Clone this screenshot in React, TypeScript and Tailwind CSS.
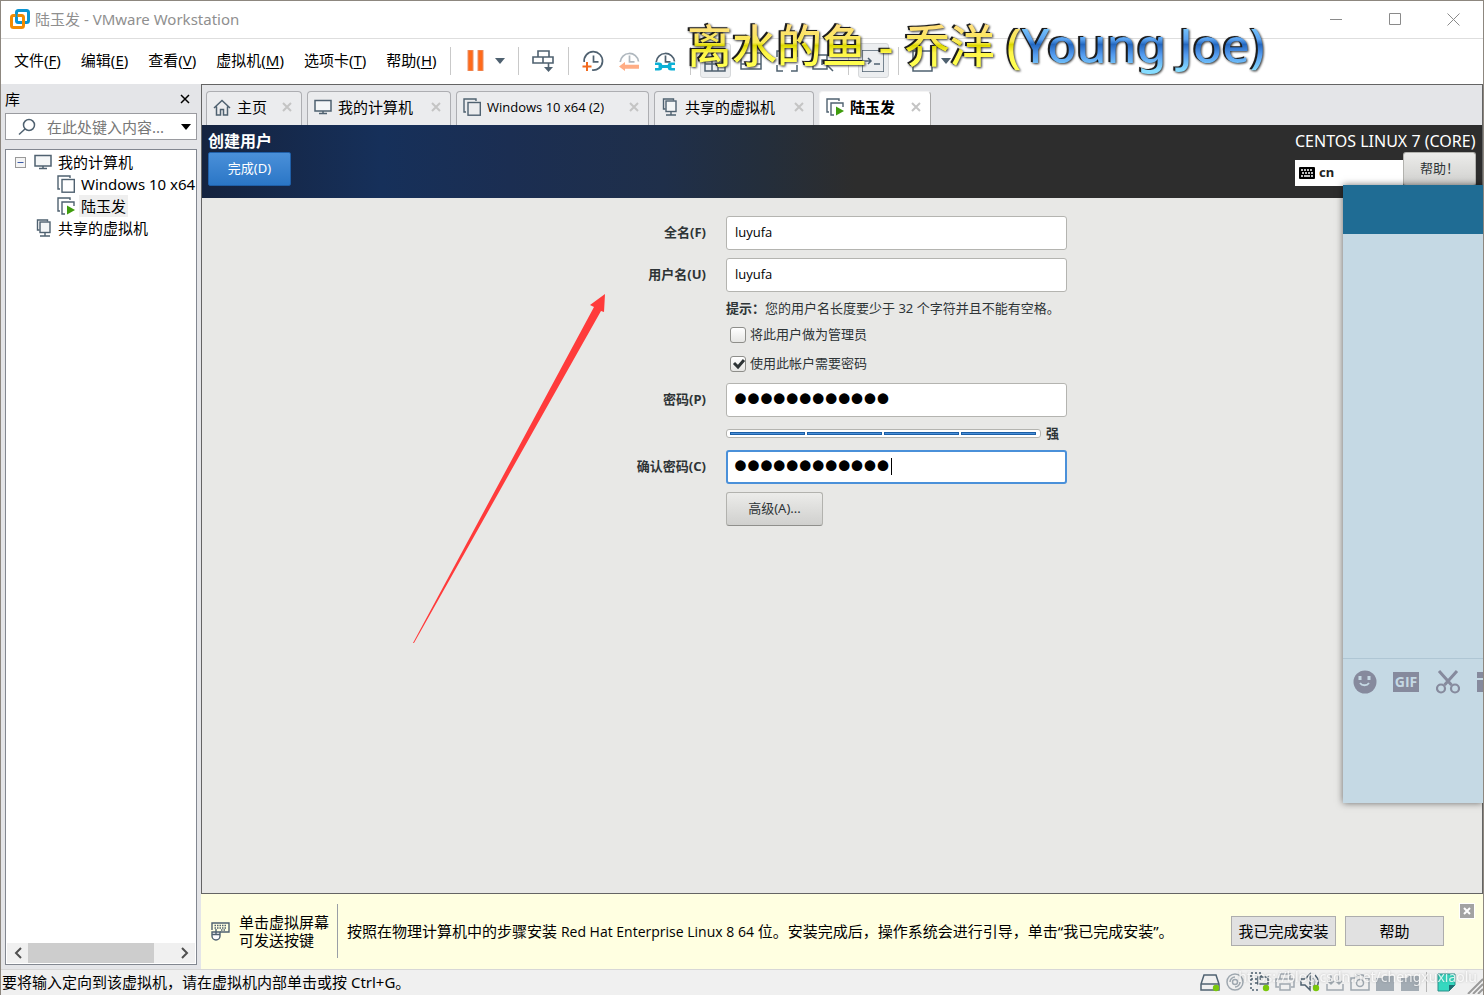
import type { ReactNode } from "react";

const slate = "#4f6170";

const menus = [
  { label: "文件", key: "F" },
  { label: "编辑", key: "E" },
  { label: "查看", key: "V" },
  { label: "虚拟机", key: "M" },
  { label: "选项卡", key: "T" },
  { label: "帮助", key: "H" },
];

/* ---------- icons ---------- */

function VmwareLogo() {
  return (
    <svg width="20" height="20" viewBox="0 0 20 20" fill="none" strokeWidth="3">
      <rect x="6.5" y="1.5" width="12" height="12" rx="2" stroke="#0b95d3" />
      <rect x="1.5" y="6.5" width="12" height="12" rx="2" stroke="#f38b00" />
      <path d="M6.5 5v7a1.5 1.5 0 0 0 1.500 1.500h3" stroke="#0b95d3" strokeWidth="2" />
    </svg>
  );
}

function MonitorIcon() {
  return (
    <svg width="18" height="16" viewBox="0 0 18 16" fill="none" stroke={slate} strokeWidth="1.500" className="shrink-0">
      <rect x="1" y="1.500" width="16" height="10.500" fill="#f4f6f7" />
      <path d="M9 12v2M5 14.500h8" />
    </svg>
  );
}

function PagesIcon({ running = false }: { running?: boolean }) {
  return (
    <svg width="18" height="18" viewBox="0 0 18 18" fill="none" stroke={slate} strokeWidth="1.400" className="shrink-0">
      <path d="M3 14H1V1h12v2" />
      {running ? <path d="M8 17H5V5h12v4" /> : <rect x="5" y="4.500" width="12.300" height="12.700" />}
      {running && <path d="M10 8.500v9l8-4.500z" fill="#3f9c0d" stroke="none" />}
    </svg>
  );
}

function SharedIcon() {
  return (
    <svg width="16" height="18" viewBox="0 0 16 18" fill="none" stroke={slate} strokeWidth="1.400" className="shrink-0">
      <path d="M3.500 11H1.500V1h10v1.500" />
      <rect x="4" y="3" width="10" height="10.500" fill="#f4f6f7" />
      <path d="M9 13.500v3M4 17h10" />
    </svg>
  );
}

function HomeIcon() {
  return (
    <svg width="18" height="17" viewBox="0 0 18 17" fill="none" stroke={slate} strokeWidth="1.500" className="shrink-0">
      <path d="M1 9l8-7.500L17 9M3.500 7.500V16h4v-5.500h3V16h4V7.500" />
    </svg>
  );
}

function CloseIcon() {
  return (
    <svg width="10" height="10" viewBox="0 0 10 10" stroke="#c4c4c4" strokeWidth="2">
      <path d="M1 1l8 8M9 1L1 9" />
    </svg>
  );
}

function Caret({ color = slate }: { color?: string }) {
  return (
    <svg width="10" height="6" viewBox="0 0 10 6">
      <path d="M0 0h10L5 6z" fill={color} />
    </svg>
  );
}

function ClockIcon({ kind }: { kind: "add" | "revert" | "manage" }) {
  return (
    <svg width="22" height="22" viewBox="0 0 22 22" fill="none" stroke={slate} strokeWidth="1.700">
      <g opacity={kind === "revert" ? 0.45 : 1}>
        <path d={kind === "add" ? "M2.200 12A9.200 9.200 0 1 1 10 20" : "M2.200 12A9.200 9.200 0 0 1 20.500 11.500"} />
        <path d="M11.500 5.500v6.300h5" />
      </g>
      {kind === "add" && <path d="M5 12v9M.5 16.500h9" stroke="#f26a1e" strokeWidth="2" />}
      {kind === "revert" && <path d="M1 16.500l6-4.500v2.700h14v4H7V21z" fill="#ffad85" stroke="none" />}
      {kind === "manage" && (
        <path
          d="M1 12.500h4c2 0 3 .800 3.300 2.500h5.400c.300-1.700 1.300-2.500 3.300-2.500h4V15h-3.500v3H21v2.500h-4c-2 0-3-.800-3.300-2.500H8.300c-.300 1.700-1.300 2.500-3.300 2.500H1V18h3.500v-3H1z"
          fill="#0bb0d6"
          stroke="none"
        />
      )}
    </svg>
  );
}

function SendKeysIcon() {
  return (
    <svg width="22" height="22" viewBox="0 0 22 22" fill="none" stroke={slate} strokeWidth="1.600">
      <path d="M6 1h11v6H6zM1 7h20v6H1zM11 7v6M16.500 13v7" />
      <path d="M12 17h9l-4.500 5z" fill={slate} stroke="none" />
    </svg>
  );
}

function ViewIcon({ d }: { d: string }) {
  return (
    <svg width="22" height="22" viewBox="0 0 22 22" fill="none" stroke={slate} strokeWidth="1.500">
      <path d={d} />
    </svg>
  );
}

/* ---------- window chrome ---------- */

function TitleBar() {
  return (
    <header className="flex h-[38px] shrink-0 items-center border-b border-[#dedede] bg-white pb-px pl-[9px]">
      <VmwareLogo />
      <h1 className="ml-[5px] flex-1 text-[15px] leading-5 text-[#8f8f8f]">陆玉发 - VMware Workstation</h1>
      <button aria-label="最小化" className="flex h-full w-[59px] items-center justify-center">
        <svg width="12" height="12" stroke="#8a8a8a"><path d="M0 6.500h12" /></svg>
      </button>
      <button aria-label="最大化" className="flex h-full w-[59px] items-center justify-center">
        <svg width="12" height="12" fill="none" stroke="#8a8a8a"><path d="M.5.500h11v11H.500z" /></svg>
      </button>
      <button aria-label="关闭" className="flex h-full w-[59px] items-center justify-center">
        <svg width="13" height="13" stroke="#8a8a8a"><path d="M.5.500l12 12M12.500.500l-12 12" /></svg>
      </button>
    </header>
  );
}

function Separator() {
  return <span className="mr-[6px] ml-[7px] h-7 w-px shrink-0 bg-[#c9c9c9]" />;
}

function ToolButton({ label, active = false, children }: { label: string; active?: boolean; children: ReactNode }) {
  return (
    <button aria-label={label} className="flex h-10 w-9 shrink-0 items-center justify-center">
      {active ? (
        <span className="flex h-[35px] w-[31px] items-center justify-center rounded-[3px] border border-[#d6d8da] bg-[#eceef0]">
          {children}
        </span>
      ) : (
        children
      )}
    </button>
  );
}

function MenuBar() {
  return (
    <div className="flex h-[45px] shrink-0 items-center bg-white pb-[2px]">
      <nav className="flex w-[442px] shrink-0 gap-5 pb-[2px] pl-[13px] text-[15px] leading-5 whitespace-nowrap">
        {menus.map((m) => (
          <button key={m.key}>
            {m.label}(<u className="underline-offset-2">{m.key}</u>)
          </button>
        ))}
      </nav>
      <Separator />
      <ToolButton label="挂起">
        <svg width="17" height="21"><path d="M1 0h5v21H1zM11 0h5v21h-5z" fill="#ff6a1a" stroke="#e8926a" /></svg>
      </ToolButton>
      <button aria-label="电源选项" className="w-[18px] pl-[2px]"><Caret /></button>
      <Separator />
      <ToolButton label="发送 Ctrl+Alt+Del"><SendKeysIcon /></ToolButton>
      <Separator />
      <ToolButton label="拍摄快照"><ClockIcon kind="add" /></ToolButton>
      <ToolButton label="恢复快照"><ClockIcon kind="revert" /></ToolButton>
      <ToolButton label="管理快照"><ClockIcon kind="manage" /></ToolButton>
      <Separator />
      <ToolButton label="显示库" active><ViewIcon d="M1 1h20v20H1zM1 14h20M8 1v20M14 14v7" /></ToolButton>
      <ToolButton label="显示缩略图"><ViewIcon d="M1 3h20v16H1zM1 14h20" /></ToolButton>
      <ToolButton label="全屏"><ViewIcon d="M1 7V1h6M15 1h6v6M21 15v6h-6M7 21H1v-6" /></ToolButton>
      <ToolButton label="Unity"><ViewIcon d="M1 5h14v14H1zM10 10l11 11M10 15v-5h5" /></ToolButton>
      <Separator />
      <ToolButton label="控制台" active><ViewIcon d="M0 0h22v22H0zM1 11h8M6 8l3 3-3 3M12 14h6" /></ToolButton>
      <Separator />
      <ToolButton label="自由拉伸"><ViewIcon d="M1 1h19v20H1z" /></ToolButton>
      <Caret />
    </div>
  );
}

/* ---------- library ---------- */

function Library() {
  return (
    <aside className="flex w-[200px] shrink-0 flex-col bg-[#e4e5e8] px-1 pb-1 text-[15px]">
      <div className="flex h-[29px] items-center justify-between pr-[7px] leading-5">
        <h2>库</h2>
        <button aria-label="关闭库">
          <svg width="10" height="10" stroke="#000" strokeWidth="1.500"><path d="M1 1l8 8M9 1L1 9" /></svg>
        </button>
      </div>
      <div className="flex h-[27px] items-center border border-[#9a9ba0] bg-white pr-[5px] pl-3">
        <svg width="18" height="18" viewBox="0 0 18 18" fill="none" stroke={slate} strokeWidth="1.500">
          <circle cx="11" cy="7" r="5.500" />
          <path d="M7 11l-6 5.500" />
        </svg>
        <input
          aria-label="搜索库"
          placeholder="在此处键入内容..."
          className="ml-[11px] w-0 flex-1 leading-5 outline-none placeholder:text-[#777]"
        />
        <Caret color="#000" />
      </div>
      <div className="mt-[9px] flex min-h-0 flex-1 flex-col border border-[#828790] bg-white">
        <ul className="flex-1 overflow-hidden pt-px leading-[22px] whitespace-nowrap">
          <li className="flex h-[22px] items-center pl-[9px]">
            <svg width="11" height="11" fill="#f4f4f4" stroke="#999">
              <rect x=".5" y=".5" width="10" height="10" />
              <path d="M2.500 5.500h6" stroke="#3a5aa8" />
            </svg>
            <span className="mr-[6px] ml-2"><MonitorIcon /></span>
            我的计算机
          </li>
          <li className="flex h-[22px] items-center pl-[51px]">
            <PagesIcon />
            <span className="pl-[6px]">Windows 10 x64</span>
          </li>
          <li className="flex h-[22px] items-center pl-[51px]">
            <PagesIcon running />
            <span className="ml-1 bg-[#efefef] px-[2px]">陆玉发</span>
          </li>
          <li className="flex h-[22px] items-center pl-[30px]">
            <SharedIcon />
            <span className="pl-[6px]">共享的虚拟机</span>
          </li>
        </ul>
        <div className="m-px flex h-5 items-center bg-[#f0f0f0]">
          <button aria-label="向左滚动" className="flex w-[21px] justify-center">
            <svg width="8" height="12" fill="none" stroke="#505050" strokeWidth="2"><path d="M7 1L2 6l5 5" /></svg>
          </button>
          <span className="h-full w-[126px] bg-[#cdcdcd]" />
          <button aria-label="向右滚动" className="mr-[6px] ml-auto">
            <svg width="8" height="12" fill="none" stroke="#505050" strokeWidth="2"><path d="M1 1l5 5-5 5" /></svg>
          </button>
        </div>
      </div>
    </aside>
  );
}

/* ---------- tabs ---------- */

const tabs = [
  { label: "主页", icon: <HomeIcon />, width: "w-24", text: "text-[15px]" },
  { label: "我的计算机", icon: <MonitorIcon />, width: "w-36", text: "text-[15px]" },
  { label: "Windows 10 x64 (2)", icon: <PagesIcon />, width: "w-[193px]", text: "font-['Open_Sans'] text-[13px]" },
  { label: "共享的虚拟机", icon: <SharedIcon />, width: "w-40", text: "text-[15px]" },
  { label: "陆玉发", icon: <PagesIcon running />, width: "w-28", text: "text-[15px] font-bold", active: true },
];

function Tabs() {
  return (
    <div role="tablist" className="flex h-10 shrink-0 items-end gap-[5px] bg-[#e4e5e8] pl-1">
      {tabs.map((t) => (
        <div
          key={t.label}
          className={`flex h-[34px] items-center rounded-t-[4px] border border-b-0 pr-[9px] pb-[3px] pl-[6px] ${t.width} ${
            t.active ? "border-[#f4f4f4] border-r-[#aaa] bg-white" : "border-[#adaeb2] bg-[#ebecee]"
          }`}
        >
          <button role="tab" aria-selected={!!t.active} className={`flex flex-1 items-center gap-[6px] leading-5 whitespace-nowrap ${t.text}`}>
            <span className="flex w-[18px] shrink-0 justify-center">{t.icon}</span>
            {t.label}
          </button>
          <button aria-label="关闭选项卡"><CloseIcon /></button>
        </div>
      ))}
    </div>
  );
}

/* ---------- installer running inside the VM ---------- */

const greyButton =
  "rounded-[3px] border border-[#b2b2ae] border-b-[#8f8f8c] bg-linear-to-b from-[#ececea] to-[#d0d0ce] pb-px text-[13px] text-[#2e3436]";
const field =
  "h-[34px] w-full rounded-[3px] border border-[#b4b4b0] bg-white px-2 pb-[2px] font-['Open_Sans'] text-[13px] text-black outline-none";
const dots = "font-['Liberation_Sans'] text-[37px] font-bold text-black outline-none";

function GuestHeader() {
  return (
    <div className="flex h-[73px] shrink-0 justify-between bg-[linear-gradient(to_right,#15233f_0%,#16305a_14%,#1b2e52_24%,#1f2f4a_36%,#242e3b_44%,#2d2d2d_51%)] px-[6px] text-white">
      <div className="flex flex-col items-start pt-[6px]">
        <h2 className="text-[16px] leading-[21px] font-bold">创建用户</h2>
        <button className="h-[34px] w-[83px] rounded-[2px] border border-[#1f5fa8] bg-linear-to-b from-[#4a90d9] to-[#2a76c6] pb-px text-[13px]">
          完成(D)
        </button>
      </div>
      <div className="w-[181px] pt-[6px]">
        <p className="text-[16px] leading-[21px] whitespace-nowrap">CENTOS LINUX 7 (CORE)</p>
        <div className="flex items-end">
          <div className="flex h-[26px] flex-1 items-center gap-1 bg-white pl-1 text-[13px] font-bold text-[#222]">
            <svg width="16" height="12" viewBox="0 0 16 12">
              <rect width="16" height="12" rx="1" fill="#000" />
              <path d="M2 3h12M3 6h11" stroke="#fff" strokeWidth="1.500" strokeDasharray="2 1" />
              <path d="M2 9h2M5 9h6M12 9h2" stroke="#fff" strokeWidth="1.500" />
            </svg>
            cn
          </div>
          <button className={`h-[34px] w-[73px] ${greyButton}`}>帮助！</button>
        </div>
      </div>
    </div>
  );
}

function UserForm() {
  const label = "text-right font-bold whitespace-nowrap";
  return (
    <form className="grid grid-cols-[89px_341px] items-center justify-center gap-x-5 gap-y-2 pt-[18px] text-[13px] text-[#2e3436]">
      <label htmlFor="fullname" className={label}>全名(F)</label>
      <input id="fullname" defaultValue="luyufa" className={field} />

      <label htmlFor="username" className={label}>用户名(U)</label>
      <input id="username" defaultValue="luyufa" className={field} />

      <p className="col-start-2 h-[17px] leading-[17px] whitespace-nowrap">
        <b>提示：</b>您的用户名长度要少于 32 个字符并且不能有空格。
      </p>

      <label className="col-start-2 flex h-[21px] items-center gap-1 pb-px pl-1">
        <input
          type="checkbox"
          className="h-4 w-4 appearance-none rounded-[3px] border border-[#8e8e8a] bg-linear-to-b from-white to-[#e6e6e4]"
        />
        将此用户做为管理员
      </label>

      <label className="col-start-2 flex h-[21px] items-center gap-1 pb-px pl-1">
        <span className="relative flex">
          <input
            type="checkbox"
            defaultChecked
            className="peer h-4 w-4 appearance-none rounded-[3px] border border-[#8e8e8a] bg-linear-to-b from-white to-[#e6e6e4]"
          />
          <svg viewBox="0 0 16 16" className="pointer-events-none absolute inset-0 hidden peer-checked:block" fill="none" stroke="#2e3436" strokeWidth="3">
            <path d="M4 7l4 4 6-7" />
          </svg>
        </span>
        使用此帐户需要密码
      </label>

      <label htmlFor="password" className={label}>密码(P)</label>
      <input
        id="password"
        type="password"
        defaultValue="luyufa123456"
        className={`h-[34px] w-full rounded-[3px] border border-[#b4b4b0] bg-white px-[7px] pb-[2px] ${dots}`}
      />

      <div className="col-start-2 flex h-[17px] items-center gap-[5px]">
        <div className="flex h-[9px] w-[315px] items-center gap-[2px] rounded-[3px] border border-[#b4b4b0] bg-white pr-1 pl-[3px]">
          {[0, 1, 2, 3].map((i) => (
            <span key={i} className="h-[3px] flex-1 border border-[#1c5fa6] bg-[#4a90d9]" />
          ))}
        </div>
        <b>强</b>
      </div>

      <label htmlFor="confirm" className={label}>确认密码(C)</label>
      <div className="relative flex">
        <input
          id="confirm"
          type="password"
          defaultValue="luyufa123456"
          className={`h-[34px] w-full rounded-[3px] border-2 border-[#4a90d9] bg-white px-[6px] pb-[2px] ${dots}`}
        />
        <span className="absolute top-2 left-[165px] h-[17px] w-px bg-black" />
      </div>

      <button type="button" className={`col-start-2 h-[34px] w-[97px] ${greyButton}`}>高级(A)...</button>
    </form>
  );
}

function ChatWindow() {
  return (
    <section className="absolute top-[184px] right-0 flex h-[618px] w-[140px] flex-col overflow-hidden bg-[#c5d9e4] shadow-[0_0_7px_rgba(0,0,0,0.55)]">
      <div className="h-[49px] bg-[#1f6c94]" />
      <div className="flex-1 border-b border-[#afc6d4]" />
      <div className="flex h-[144px] shrink-0 items-start pt-[11px] pl-[10px]">
        <button aria-label="表情" className="mr-4 shrink-0">
          <svg width="24" height="24" viewBox="0 0 24 24">
            <circle cx="12" cy="12" r="11.500" fill="#868a9d" />
            <path d="M5.500 6h3v4h-3zM14.500 6h3v4h-3z" fill="#c5d9e4" />
            <path d="M7 13c2 3 7 3 9 0" stroke="#c5d9e4" strokeWidth="1.800" fill="none" />
          </svg>
        </button>
        <button
          aria-label="动图"
          className="mt-[2px] mr-[17px] flex h-5 w-[26px] shrink-0 items-center justify-center bg-[#868a9d] font-['Open_Sans'] text-[14px] leading-5 font-bold text-[#c5d9e4]"
        >
          GIF
        </button>
        <button aria-label="截图" className="mr-[17px] shrink-0">
          <svg width="24" height="24" viewBox="0 0 24 24" fill="none" stroke="#868a9d">
            <path d="M3 1l12.500 14M21 1L8.500 15" strokeWidth="3" />
            <circle cx="5" cy="18.500" r="4" strokeWidth="2.200" />
            <circle cx="19" cy="18.500" r="4" strokeWidth="2.200" />
          </svg>
        </button>
        <svg width="24" height="22" className="shrink-0" fill="#868a9d"><path d="M0 2h24v6H0zM0 10h24v12H0z" /></svg>
      </div>
    </section>
  );
}

function VirtualMachine() {
  return (
    <div className="relative flex min-h-0 flex-1 flex-col bg-[#e8e8e6]">
      <GuestHeader />
      <UserForm />
      <svg width="194" height="351" viewBox="0 0 194 351" className="pointer-events-none absolute top-[168px] left-[210px]" fill="#ff3b3b">
        <path d="M193 1l-1 18-3-1L2 350l-1 0L182 14l-4-2z" />
      </svg>
    </div>
  );
}

/* ---------- bottom bars ---------- */

function InstallHint() {
  const button = "h-[30px] border border-[#adadad] bg-[#e1e1e1] pb-px leading-5";
  return (
    <div className="flex h-[75px] shrink-0 items-center bg-[#ffffe1] pb-px pl-[10px] text-[15px] leading-5 whitespace-nowrap">
      <svg width="19" height="19" viewBox="0 0 19 19" fill="none" stroke={slate} strokeWidth="1.400">
        <path d="M1 8V1h17v9h-9" />
        <path d="M3.500 3.500h12M3.500 6h12M10 8h5" strokeDasharray="1.500 1" />
        <path d="M1 10h8v4a4 4 0 0 1-8 0zM5 7v6M1 12.500h8" fill="#fff" />
      </svg>
      <p className="w-[107px] pl-[9px] leading-[18px]">
        单击虚拟屏幕
        <br />
        可发送按键
      </p>
      <span className="mr-[9px] h-[54px] w-px bg-[#9a9fa6]" />
      <p className="flex-1">
        按照在物理计算机中的步骤安装 <span className="font-['Open_Sans'] text-[14px]">Red Hat Enterprise Linux 8 64</span>{" "}
        位。安装完成后，操作系统会进行引导，单击“我已完成安装”。
      </p>
      <button className={`mr-[9px] w-[105px] ${button}`}>我已完成安装</button>
      <button className={`mr-[15px] w-[99px] ${button}`}>帮助</button>
      <button aria-label="关闭提示" className="mr-[8px] self-start pt-[9px]">
        <svg width="16" height="16">
          <rect width="16" height="16" fill="#fff" />
          <rect x="1" y="1" width="14" height="14" fill="#a3a3a3" />
          <path d="M5 5l6 6M11 5l-6 6" stroke="#fff" strokeWidth="2" />
        </svg>
      </button>
    </div>
  );
}

const devices: { label: string; dim?: boolean; dot?: boolean; icon: ReactNode }[] = [
  { label: "硬盘", dot: true, icon: <path d="M4 3h12l3 9v6H1v-6zM1 12h18" /> },
  { label: "光驱", dim: true, icon: <><circle cx="10" cy="10" r="8" /><circle cx="10" cy="10" r="2.500" /><path d="M5 10a5 5 0 0 1 5-5M15 10a5 5 0 0 1-5 5" /></> },
  { label: "网络适配器", dot: true, icon: <><path d="M1 1h10v6H1zM1 7v11h8" strokeDasharray="2 2" /><path d="M8 5h10v7H8zM5 11h4" /></> },
  { label: "打印机", dim: true, icon: <path d="M5 7V2h10v5M4 15H1V7h18v8h-3M5 12h10v6H5z" /> },
  { label: "声卡", dot: true, icon: <path d="M1 7h4l5-5v16l-5-5H1zM13 6c2 2 2 6 0 8M15 3c4 4 4 9 1 13" /> },
  { label: "USB", dim: true, icon: <path d="M2 12v6h16v-6M6 3v9M3 9l3 3 3-3M14 3v9M11 9l3 3 3-3" /> },
  { label: "摄像头", dim: true, icon: <><path d="M1 6h4l2-3h6l2 3h4v12H1z" /><circle cx="10" cy="11" r="3.500" /></> },
  { label: "设备 1", icon: <path d="M1 19V6h6l2-2h10v15z" fill="#a3acb4" stroke="none" /> },
  { label: "设备 2", icon: <path d="M1 19V6h6l2-2h10v15z" fill="#a3acb4" stroke="none" /> },
];

function StatusBar() {
  return (
    <footer className="relative flex h-[26px] shrink-0 items-center border-t border-[#d7d7d7] bg-[#f0f0f0] pb-px pl-px text-[15px] leading-5 whitespace-nowrap">
      <p className="flex-1">要将输入定向到该虚拟机，请在虚拟机内部单击或按 Ctrl+G。</p>
      {devices.map((d) => (
        <button key={d.label} aria-label={d.label} className="flex w-[25px] justify-center">
          <svg width="20" height="20" viewBox="0 0 20 20" fill="none" stroke={slate} strokeWidth="1.500">
            <g opacity={d.dim ? 0.5 : 1}>{d.icon}</g>
            {d.dot && <circle cx="16" cy="16" r="3.200" fill="#7ac70c" stroke="none" />}
          </svg>
        </button>
      ))}
      <span className="mr-[10px] ml-[4px] h-5 w-px bg-[#b5b5b5]" />
      <svg width="19" height="19" className="mr-[11px]">
        <path d="M1 1h17v11l-6 6H1z" fill="#36d8c0" stroke="#2a8f8a" />
        <path d="M18 12h-6v6z" fill="#1f6b70" />
      </svg>
      <svg width="16" height="16" className="self-end" stroke="#9a9a9a" strokeWidth="2">
        <path d="M1 16L16 1M6 16L16 6M11 16l5-5" />
      </svg>
      <span className="pointer-events-none absolute right-[6px] bottom-[8px] text-[14px] leading-5 text-white/80 drop-shadow-[0_0_1px_rgba(0,0,0,0.25)]">
        https://blog.csdn.net/chengxuxiaolu
      </span>
    </footer>
  );
}

function DesktopLyrics() {
  return (
    <p className="pointer-events-none absolute top-[12px] left-[686px] text-[45px] leading-[64px] font-medium whitespace-pre [filter:drop-shadow(-2px_-1px_0_#1c1c1c)_drop-shadow(1px_1px_1px_#333)]">
      <span className="bg-[linear-gradient(to_bottom,#ffe07a_20%,#f8ea50_45%,#dcd800_50%,#fff64a_62%,#ffff50_80%)] bg-clip-text text-transparent">
        离水的鱼 - 乔洋{" "}
      </span>
      <span className="bg-[linear-gradient(to_bottom,#ffe07a_20%,#f8ea50_45%,#dcd800_50%,#fff64a_62%,#ffff50_80%)] bg-clip-text text-[48px] text-transparent">
        (
      </span>
      <span className="bg-[linear-gradient(to_bottom,#7fd0ff_18%,#5aa2f0_42%,#2468c0_50%,#559cf0_66%,#86dcff_90%)] bg-clip-text text-[48px] text-transparent">
        Young Joe)
      </span>
    </p>
  );
}

export default function App() {
  return (
    <div className="relative flex h-screen min-h-[700px] flex-col overflow-hidden border-x border-t border-[#8d877f] bg-[#e4e5e8] font-['Noto_Sans','Noto_Sans_CJK_SC',sans-serif] text-black">
      <TitleBar />
      <MenuBar />
      <div className="flex min-h-0 flex-1">
        <Library />
        <main className="flex min-w-0 flex-1 flex-col">
          <div className="flex min-h-0 flex-1 flex-col border border-[#646464]">
            <Tabs />
            <VirtualMachine />
          </div>
          <InstallHint />
        </main>
      </div>
      <StatusBar />
      <ChatWindow />
      <DesktopLyrics />
    </div>
  );
}
